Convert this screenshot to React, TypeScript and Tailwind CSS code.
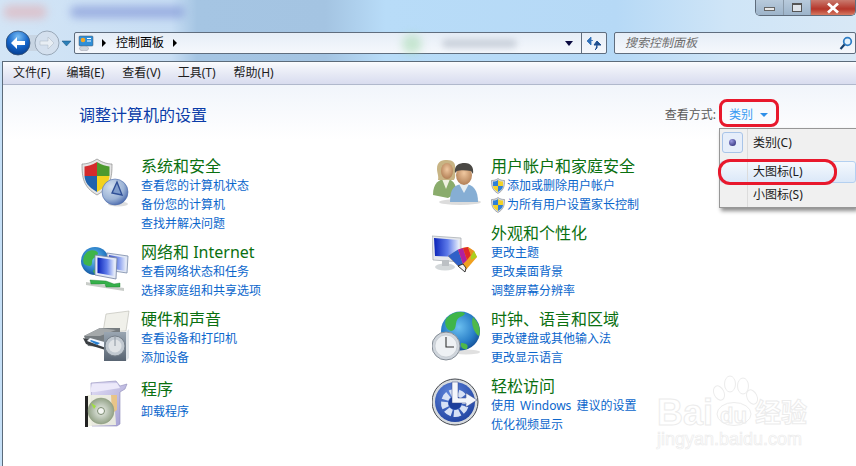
import React from "react";

function Defs() {
  return (
    <svg width="0" height="0" className="absolute">
      <defs>
        <radialGradient id="pie" cx="0.35" cy="0.3" r="0.8"><stop offset="0" stopColor="#d3e0f0" /><stop offset="0.6" stopColor="#9db4d6" /><stop offset="1" stopColor="#3b5ca6" /></radialGradient>
        <radialGradient id="globe" cx="0.45" cy="0.4" r="0.7"><stop offset="0" stopColor="#6cc0f0" /><stop offset="0.6" stopColor="#2a7fc8" /><stop offset="1" stopColor="#0c3f86" /></radialGradient>
        <linearGradient id="screen" x1="0" y1="0" x2="1" y2="0"><stop offset="0" stopColor="#0a23b8" /><stop offset="0.55" stopColor="#5e7bea" /><stop offset="1" stopColor="#e8eefc" /></linearGradient>
        <radialGradient id="blueBtn" cx="0.5" cy="0.25" r="0.85"><stop offset="0" stopColor="#7cc0f5" /><stop offset="0.5" stopColor="#1464c8" /><stop offset="1" stopColor="#04327e" /></radialGradient>
        <radialGradient id="accBtn" cx="0.4" cy="0.3" r="0.8"><stop offset="0" stopColor="#5f86dc" /><stop offset="1" stopColor="#1c3e9c" /></radialGradient>
        <linearGradient id="greySpeaker" x1="0" y1="0" x2="0" y2="1"><stop offset="0" stopColor="#9aa6b2" /><stop offset="1" stopColor="#586472" /></linearGradient>
        <radialGradient id="skin" cx="0.5" cy="0.4" r="0.7"><stop offset="0" stopColor="#f0c8a0" /><stop offset="1" stopColor="#a8744a" /></radialGradient>
        <radialGradient id="cd" cx="0.5" cy="0.5" r="0.55"><stop offset="0" stopColor="#f2f4ee" /><stop offset="0.5" stopColor="#bcc6b6" /><stop offset="1" stopColor="#8a9a7c" /></radialGradient>
        <linearGradient id="box" x1="0" y1="0" x2="1" y2="1"><stop offset="0" stopColor="#e4e0f6" /><stop offset="1" stopColor="#a09cd0" /></linearGradient>
      </defs>
    </svg>
  );
}

function Shield({ size = 50 }: { size?: number }) {
  return (
    <svg width={size} height={size} viewBox="0 0 50 50" className="shrink-0">
      <ellipse cx="38" cy="47" rx="10" ry="2.500" fill="#bbb" opacity="0.5" />
      <path d="M17 2 C11 6 6 7 2 7 C2 20 3 30 17 38 C31 30 32 20 32 7 C28 7 23 6 17 2Z" fill="#e4e4e4" stroke="#8a8a8a" strokeWidth="0.7" />
      <path d="M17 5 C12 8 8 9 4.500 9.500 L4.500 19 L17 19Z" fill="#d42a2c" />
      <path d="M17 5 C22 8 26 9 29.500 9.500 L29.500 19 L17 19Z" fill="#4c9a2e" />
      <path d="M4.500 19 L17 19 L17 35 C8 30 5 25 4.500 19Z" fill="#1f62ae" />
      <path d="M17 19 L29.500 19 C29 25 26 30 17 35Z" fill="#f2d21f" />
      <circle cx="35" cy="35" r="13" fill="url(#pie)" stroke="#4a68a8" strokeWidth="0.6" />
      <path d="M32 36 L37 25 L42 38Z" fill="#7f9ccb" stroke="#2f4f96" strokeWidth="1.400" />
    </svg>
  );
}

function Network() {
  return (
    <svg width={50} height={50} viewBox="0 0 50 50" className="shrink-0">
      <circle cx="15" cy="18" r="14" fill="url(#globe)" />
      <path d="M7 9 C11 6 17 7 18 10 C17 15 12 14 12 19 C12 25 8 23 4 21 C2 16 4 12 7 9Z" fill="#3fb54a" />
      <path d="M13 28 C14 25 20 25 23 26 L21 31 L15 32Z" fill="#3fb54a" />
      <path d="M27 10 L48 13 L47 30 L27 27Z" fill="#dfe6f4" stroke="#7a8aa8" strokeWidth="0.8" />
      <path d="M29 12 L46 15 L45 28 L29 25Z" fill="url(#screen)" opacity="0.75" />
      <path d="M15 12 L37 15 L36 36 L15 32Z" fill="#e2e8f6" stroke="#7280a0" strokeWidth="0.8" />
      <path d="M17.500 14.500 L34.500 17 L34 33 L17.500 30Z" fill="url(#screen)" />
      <path d="M6 39 L44 45 L44 48 L6 42Z" fill="#c8ccc8" />
      <path d="M10 37 L26 38 L34 41 L40 40 L40 44 L32 44 L26 44 L25 41 L11 41Z" fill="#35b04a" stroke="#1d7a2c" strokeWidth="0.4" />
    </svg>
  );
}

function Printer() {
  return (
    <svg width={50} height={54} viewBox="0 0 50 54" className="ml-[2px] shrink-0">
      <path d="M24 4 L47 1 L44 21 L21 22Z" fill="#f0f0ea" stroke="#b8b8b0" strokeWidth="0.6" />
      <path d="M2 26 L18 18 L38 18 L38 38 L6 36 Z" fill="#767c80" />
      <path d="M2 26 L18 18 L34 20 L18 26Z" fill="#a4a8aa" />
      <path d="M1 28 L30 36 L30 42 L4 34Z" fill="#3a3e42" />
      <path d="M8 28 L26 33 L24 38 L5 31Z" fill="#f4f8ff" />
      <path d="M9 30 L18 33 L15 35 L8 31Z" fill="#2a80d0" />
      <rect x="22" y="22" width="22" height="29" fill="url(#greySpeaker)" />
      <path d="M44 22 L47 19 L47 48 L44 51Z" fill="#dfe4e8" />
      <circle cx="33" cy="36" r="10" fill="#c0c8d0" stroke="#76808a" />
      <circle cx="33" cy="36" r="6.500" fill="#dfe3e6" />
      <path d="M33 36 L33 27" stroke="#8a949e" strokeWidth="1" />
    </svg>
  );
}

function Programs() {
  return (
    <svg width={48} height={50} viewBox="0 0 48 50" className="ml-[4px] shrink-0">
      <path d="M7 3 L32 1 L36 6 L43 4 L41 9 L36 12 L36 44 L33 46 L8 46Z" fill="url(#box)" stroke="#8e8cb8" strokeWidth="0.6" />
      <path d="M6 12 L8 4 L33 3 L36 8 L11 12Z" fill="#ece9fa" />
      <path d="M3 15 L30 15 L32 45 L4 46Z" fill="#eef0e0" opacity="0.9" />
      <rect x="1" y="16" width="3" height="31" fill="#222" />
      <path d="M27 15 L33 15 L33 30 L28 33Z" fill="#e8c488" />
      <circle cx="17" cy="31" r="13" fill="url(#cd)" stroke="#8a9a7c" strokeWidth="0.5" />
      <path d="M7 23 L12 26 L10 29Z" fill="#a0e040" />
      <circle cx="17" cy="31" r="3.500" fill="#f4f6f2" stroke="#7a8a70" />
    </svg>
  );
}

function Users() {
  return (
    <svg width={50} height={50} viewBox="0 0 50 50" className="shrink-0">
      <ellipse cx="28" cy="45" rx="21" ry="3" fill="#c4c4c4" opacity="0.6" />
      <path d="M1 38 C1 26 7 22 14 22 C20 22 24 26 25 36 L16 41Z" fill="#8aac6c" />
      <path d="M10 22 L14 32 L18 22Z" fill="#eef0e0" />
      <path d="M5 12 C5 4 10 3 15 3 C21 3 24 6 23 12 C23 17 24 20 22 23 L6 23 C7 19 5 16 5 12Z" fill="#c8b484" />
      <ellipse cx="15" cy="14" rx="6" ry="8" fill="url(#skin)" />
      <path d="M18 45 C18 32 22 27 32 27 C42 27 46 34 46 45Z" fill="#86aed4" />
      <path d="M27 27 L32 36 L37 27Z" fill="#e6eef2" />
      <ellipse cx="32" cy="18" rx="8" ry="10" fill="url(#skin)" />
      <path d="M23 16 C22 8 27 6 33 6 C39 6 42 10 41 17 L39 14 C34 13 28 13 25 14Z" fill="#4a4844" />
    </svg>
  );
}

function Appearance() {
  return (
    <svg width={50} height={50} viewBox="0 0 50 50" className="shrink-0">
      <path d="M0 12 L29 14 L29 38 L1 36Z" fill="#e6e8ec" stroke="#a0a6ac" strokeWidth="0.7" />
      <path d="M2 14 L27 16 L27 33 L3 32Z" fill="url(#screen)" />
      <ellipse cx="13" cy="43" rx="10" ry="3.500" fill="#d4d8da" />
      <rect x="10" y="36" width="7" height="6" fill="#bcc0c4" />
      <path d="M16 32 L30 24 L36 23 L42 27 L45 33 L33 47 L26 42Z" fill="#f0a020" />
      <path d="M16 32 L26 25.500 L31 40 L26 42Z" fill="#3060c8" />
      <path d="M26 25.500 L31 24 L35 36 L31 40Z" fill="#b020a0" />
      <path d="M31 24 L36 23 L39 31 L35 36Z" fill="#e02828" />
      <path d="M36 23 L42 27 L43 30 L39 32Z" fill="#e89020" />
      <path d="M42 27 L45 33 L39 36 L39 32Z" fill="#a8d020" />
      <path d="M26 42 L31 40 L34 44 L33 48Z" fill="#f4f4f4" stroke="#222" strokeWidth="0.9" />
    </svg>
  );
}

function Clock() {
  return (
    <svg width={50} height={52} viewBox="0 0 50 52" className="shrink-0">
      <ellipse cx="34" cy="42" rx="14" ry="2.500" fill="#ccc" opacity="0.6" />
      <circle cx="28.500" cy="21" r="19.500" fill="url(#globe)" />
      <path d="M14 9 C20 1 30 1 33 3 C32 7 27 6 25 10 C23 14 25 20 19 21 C14 20 12 13 14 9Z" fill="#3fb54a" />
      <path d="M41 7 C47 13 49 19 47 26 C43 24 38 14 41 7Z" fill="#4fb84a" />
      <path d="M29 33 C34 33 37 35 35 39 C31 40 28 37 29 33Z" fill="#4fb84a" />
      <circle cx="14" cy="36" r="14" fill="#cfd5dc" stroke="#858d96" />
      <circle cx="14" cy="36" r="11" fill="#eef1f4" stroke="#b4bac0" strokeWidth="0.5" />
      <path d="M14 27 L14 37 L22 37" fill="none" stroke="#333" strokeWidth="1.100" />
    </svg>
  );
}

function Access() {
  return (
    <svg width={48} height={52} viewBox="0 0 48 52" className="shrink-0">
      <circle cx="23" cy="25" r="23" fill="#d6dade" stroke="#44484f" strokeWidth="1" />
      <circle cx="23" cy="25" r="20" fill="url(#accBtn)" />
      <circle cx="23" cy="26" r="10.500" fill="none" stroke="#d8e2f6" strokeWidth="7" strokeDasharray="6 2.200" transform="rotate(-72 23 26)" />
      <circle cx="23" cy="26" r="6.500" fill="#1c3e9c" />
      <path d="M20 5 L26 5 L26 21 L34 21 L34 16 L45 23 L34 30 L34 26 L20 26Z" fill="#f4f6fb" stroke="#3a4a86" strokeWidth="0.5" />
    </svg>
  );
}

function MiniShield() {
  return (
    <svg width={14} height={16} viewBox="0 0 14 16" className="shrink-0">
      <path d="M7 0.500 C5 2 3 2.500 0.500 2.500 C0.500 8 1 12 7 15.500 C13 12 13.500 8 13.500 2.500 C11 2.500 9 2 7 0.500Z" fill="#d8dbe0" stroke="#7c8088" strokeWidth="0.6" />
      <path d="M7 2 L7 8 L2 8 L2 3.500 C4 3.500 5.500 3 7 2Z" fill="#2f80d8" />
      <path d="M7 2 L7 8 L12 8 L12 3.500 C10 3.500 8.500 3 7 2Z" fill="#f2d22a" />
      <path d="M2 8 L7 8 L7 14 C3.500 12 2.300 10.500 2 8Z" fill="#f2d22a" />
      <path d="M7 8 L12 8 C11.700 10.500 10.500 12 7 14Z" fill="#2f80d8" />
    </svg>
  );
}

function Category({ title, links, icon, gutter, mt, shield, titleClass = "" }: { title: string; links: string[]; icon: React.ReactNode; gutter: string; mt: string; shield?: boolean; titleClass?: string }) {
  return (
    <div className={`flex items-start ${mt}`}>
      <div className={`flex items-start ${gutter}`}>{icon}</div>
      <div className="flex flex-col">
        <div className={`h-[19px] text-[16px] leading-[19px] text-[#0a7010] whitespace-nowrap ${titleClass}`}>{title}</div>
        {links.map((l) => (
          <div key={l} className="flex h-[19px] items-center gap-[2px] text-[12px] leading-[19px] text-[#0a66cc] whitespace-nowrap [word-spacing:2px]">
            {shield && <MiniShield />}
            <span>{l}</span>
          </div>
        ))}
      </div>
    </div>
  );
}

export default function App() {
  return (
    <div className="relative flex h-[466px] w-[856px] flex-col overflow-hidden bg-[#c6e0f7] text-[12px] [font-family:'Noto_Sans','Noto_Sans_CJK_SC',sans-serif]">
      <Defs />
      {/* glass backdrop */}
      <div className="absolute left-0 top-0 h-[62px] w-full bg-[linear-gradient(90deg,#d3e5f6_0%,#c8def4_20%,#a5c5e3_23%,#a4c4e2_38%,#b8dcf8_45%,#b6d9f6_72%,#cfe5f7_85%,#d8e8f6_100%)]" />
      <div className="absolute left-[3px] top-[5px] h-[14px] w-[44px] rounded-full bg-[#e4a5a8] opacity-50 blur-[4px]" />
      <div className="absolute left-[70px] top-[6px] h-[12px] w-[115px] rounded-full bg-[#7b8fd4] opacity-60 blur-[4px]" />

      {/* title buttons */}
      <div className="relative z-10 flex h-[31px] items-start justify-end">
        <div className="flex h-[16px] overflow-hidden rounded-b-[5px] border border-t-0 border-[#5e6c7c]">
          <div className="flex w-[28px] items-center justify-center border-r border-[#8a9aaa] bg-[linear-gradient(#b8cadc,#9db4ca)]"><div className="mt-[3px] h-[4px] w-[11px] border border-[#666] bg-[#e8e8e8]" /></div>
          <div className="flex w-[27px] items-center justify-center border-r border-[#8a9aaa] bg-[linear-gradient(#b8cadc,#9db4ca)]"><div className="h-[9px] w-[10px] border border-[#555] border-t-2 bg-[#dfe4ea]" /></div>
          <div className="flex w-[44px] items-center justify-center bg-[linear-gradient(#c97a6e,#b5362a_60%,#d67a62)]">
            <svg width="14" height="12" viewBox="0 0 14 12"><path d="M2 1.500 L12 10.500 M12 1.500 L2 10.500" stroke="#fff" strokeWidth="2.800" /></svg>
          </div>
        </div>
      </div>

      {/* nav row */}
      <div className="relative z-10 flex h-[24px] items-center pl-[6px]">
        <div className="flex w-[68px] shrink-0 items-center">
          <svg width="66" height="28" viewBox="0 0 66 28">
            <rect x="14" y="6" width="32" height="16" fill="#c4cfdc" opacity="0.7" />
            <circle cx="12" cy="14" r="12" fill="url(#blueBtn)" stroke="#39506e" strokeWidth="0.8" />
            <path d="M5 14 L11 8 L11 12 L19 12 L19 16 L11 16 L11 20Z" fill="#fff" />
            <circle cx="41" cy="14" r="12" fill="#d4e0ee" stroke="#8a99aa" strokeWidth="0.8" />
            <path d="M48 14 L42 8 L42 12 L34 12 L34 16 L42 16 L42 20Z" fill="#e8eef4" stroke="#a8b4c0" strokeWidth="0.5" />
            <path d="M56 12 L65 12 L60.500 17Z" fill="#2b7fb8" stroke="#164f7c" strokeWidth="0.5" />
          </svg>
        </div>
        <div className="flex h-[22px] w-[533px] items-center rounded-[2px] border border-[#5f6d7e] bg-[linear-gradient(#e6eef7,#f5f8fc)]">
          <svg width="18" height="16" viewBox="0 0 18 16" className="ml-[2px] shrink-0">
            <rect x="2" y="1" width="14" height="10" rx="1" fill="#2f8fd8" stroke="#456" strokeWidth="0.5" />
            <circle cx="6" cy="5" r="2.300" fill="#f4a824" />
            <path d="M10 3.500 H14 M10 6 H14" stroke="#fff" strokeWidth="1.100" />
            <ellipse cx="7" cy="13.500" rx="4.500" ry="2.300" fill="#cdd4dc" stroke="#889" strokeWidth="0.4" />
          </svg>
          <span className="ml-[7px] h-0 w-0 border-y-[4px] border-l-[4px] border-y-transparent border-l-black" />
          <span className="ml-[10px] text-[12px] text-black">控制面板</span>
          <span className="ml-[9px] h-0 w-0 border-y-[4px] border-l-[4px] border-y-transparent border-l-black" />
          <div className="relative flex h-full flex-1 items-center">
            <div className="absolute left-[225px] top-[1px] h-[20px] w-[20px] rounded-full bg-[#9ed8a8] opacity-50 blur-[4px]" />
            <div className="absolute left-[265px] top-[6px] h-[9px] w-[75px] rounded-full bg-[#b4bcc8] opacity-60 blur-[3px]" />
          </div>
          <span className="mr-[8px] h-0 w-0 border-x-[4px] border-t-[5px] border-x-transparent border-t-[#0a0a40]" />
          <div className="flex h-full w-[25px] items-center justify-center border-l border-[#5f6d7e]">
            <svg width="16" height="15" viewBox="0 0 16 15">
              <path d="M5 1 L1 5 L5 9 Z M4 4.500 H7" fill="#2f6fb8" stroke="#2f6fb8" strokeWidth="0.8" />
              <path d="M11 5 L15 9 L8 9Z M11 8 L11 12 L9 14" fill="#1e4f90" stroke="#1e4f90" strokeWidth="1" />
            </svg>
          </div>
        </div>
        <div className="ml-[7px] flex h-[22px] flex-1 items-center justify-between rounded-[2px] border border-[#5f6d7e] bg-[linear-gradient(#e6eef7,#f5f8fc)] pl-[10px] pr-[2px]">
          <span className="text-[12px] italic text-[#6d6d6d]">搜索控制面板</span>
          <svg width="15" height="15" viewBox="0 0 15 15">
            <circle cx="9.500" cy="5.500" r="3.800" fill="#e4f2fc" stroke="#2d7cc4" strokeWidth="1.700" />
            <path d="M6.500 8.500 L2.500 13" stroke="#16406e" strokeWidth="2.200" />
          </svg>
        </div>
      </div>

      {/* window body */}
      <div className="relative z-10 mt-[6px] ml-[2px] flex flex-1 flex-col border-l border-t border-[#5c6b7a] bg-white">
        <div className="flex h-[23px] items-center border-b border-[#b0b8cc] bg-[linear-gradient(#fbfcfe,#f0f2f9_25%,#d8dcef)] pl-[10px] text-[#1c1c1c]">
          <span>文件(F)</span>
          <span className="ml-[16px]">编辑(E)</span>
          <span className="ml-[18px]">查看(V)</span>
          <span className="ml-[17px]">工具(T)</span>
          <span className="ml-[18px]">帮助(H)</span>
        </div>
        <div className="flex-1 bg-[linear-gradient(#f1f5fb,#ffffff_55px)]">
          <div className="flex h-[72px] items-start justify-between pl-[76px] pr-[88px] pt-[18px]">
            <h1 className="text-[16px] leading-[24px] text-[#0a3ca8]">调整计算机的设置</h1>
            <div className="flex h-[24px] items-center">
              <span className="text-[#5a5a5a]">查看方式:</span>
              <span className="ml-[13px] text-[#3a9af2]">类别</span>
              <span className="ml-[7px] h-0 w-0 border-x-[4px] border-t-[4px] border-x-transparent border-t-[#2f8fe8]" />
            </div>
          </div>
          <div className="flex pl-[77px]">
            <div className="flex w-[352px] flex-col">
              <Category title="系统和安全" icon={<Shield />} gutter="w-[61px]" mt="mt-0" links={["查看您的计算机状态", "备份您的计算机", "查找并解决问题"]} />
              <Category title="网络和 Internet" icon={<Network />} gutter="w-[61px]" mt="mt-[10px]" links={["查看网络状态和任务", "选择家庭组和共享选项"]} />
              <Category title="硬件和声音" icon={<Printer />} gutter="w-[61px]" mt="mt-[10px]" links={["查看设备和打印机", "添加设备"]} />
              <Category title="程序" icon={<Programs />} gutter="w-[61px]" mt="mt-[13px]" titleClass="mb-[3px]" links={["卸载程序"]} />
            </div>
            <div className="flex flex-col">
              <Category title="用户帐户和家庭安全" icon={<Users />} gutter="w-[59px]" mt="mt-0" shield links={["添加或删除用户帐户", "为所有用户设置家长控制"]} />
              <Category title="外观和个性化" icon={<Appearance />} gutter="w-[59px]" mt="mt-[10px]" links={["更改主题", "更改桌面背景", "调整屏幕分辨率"]} />
              <Category title="时钟、语言和区域" icon={<Clock />} gutter="w-[59px]" mt="mt-[10px]" links={["更改键盘或其他输入法", "更改显示语言"]} />
              <Category title="轻松访问" icon={<Access />} gutter="w-[59px]" mt="mt-[10px]" links={["使用 Windows 建议的设置", "优化视频显示"]} />
            </div>
          </div>
        </div>
      </div>

      {/* dropdown menu */}
      <div className="absolute left-[719px] top-[128px] z-20 flex h-[80px] w-[137px] flex-col border border-r-0 border-[#979797] bg-[#f0f0f0] pt-[2px] text-[#1c1c1c] shadow-[2px_3px_4px_rgba(0,0,0,0.45)]">
        <div className="absolute bottom-0 left-[27px] top-0 w-px bg-[#dcdcdc]" />
        <div className="flex h-[23px] items-center">
          <div className="ml-[2px] flex h-[21px] w-[21px] items-center justify-center rounded-[3px] border border-[#a8c4e8] bg-[#e6eefa]">
            <div className="h-[7px] w-[7px] rounded-full bg-[radial-gradient(circle_at_35%_30%,#9a9ae0,#20206c)]" />
          </div>
          <span className="ml-[10px]">类别(C)</span>
        </div>
        <div className="mt-[7px] flex h-[22px] items-center rounded-[3px] border border-[#b4d0f0] bg-[linear-gradient(#f4f8fd,#dbe8f8)]">
          <span className="ml-[32px]">大图标(L)</span>
        </div>
        <div className="flex h-[23px] items-center">
          <span className="ml-[33px]">小图标(S)</span>
        </div>
      </div>

      {/* annotations */}
      <div className="absolute left-[719px] top-[99px] z-30 h-[28px] w-[60px] rounded-[8px] border-[3px] border-[#e8182c]" />
      <div className="absolute left-[718px] top-[159px] z-30 h-[26px] w-[119px] rounded-[12px] border-[3px] border-[#e8182c]" />

      {/* watermark */}
      <div className="absolute left-[657px] top-[372px] z-30 h-[80px] w-[156px] text-white [-webkit-text-stroke:1px_#ececec]">
        <span className="absolute left-0 top-[21px] text-[36px] font-bold leading-[40px] [font-family:'Liberation_Sans',sans-serif]">Bai</span>
        <svg width="50" height="56" viewBox="0 0 50 56" className="absolute left-[56px] top-0" fill="#fff" stroke="#ececec" strokeWidth="1">
          <ellipse cx="6" cy="21" rx="5" ry="7.500" transform="rotate(-25 6 21)" />
          <ellipse cx="17" cy="12" rx="5.500" ry="8" />
          <ellipse cx="30" cy="14" rx="5.500" ry="8" />
          <ellipse cx="39" cy="25" rx="5" ry="7.500" transform="rotate(-25 39 25)" />
          <ellipse cx="21" cy="42" rx="17" ry="11.500" />
        </svg>
        <span className="absolute left-[63px] top-[30px] text-[22px] font-bold leading-[28px] [font-family:'Liberation_Sans',sans-serif]">du</span>
        <span className="absolute left-[98px] top-[21px] text-[26px] font-bold leading-[36px] [font-family:'Noto_Sans_CJK_SC',sans-serif]">经验</span>
        <span className="absolute left-0 top-[57px] whitespace-nowrap text-[18px] leading-[20px] [font-family:'Liberation_Sans',sans-serif] [-webkit-text-stroke:0.7px_#ececec]">jingyan.baidu.com</span>
      </div>
    </div>
  );
}
